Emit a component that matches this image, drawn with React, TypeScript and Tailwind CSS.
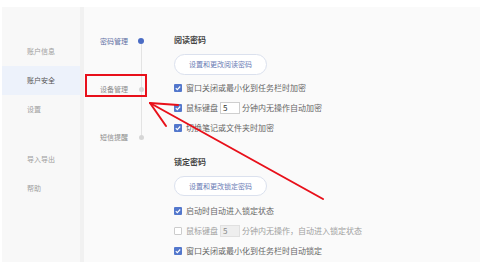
import React from "react";

const FONT = "font-['Noto_Sans_CJK_SC','Noto_Sans',sans-serif]";

function Check({ on }: { on: boolean }) {
  return on ? (
    <span className="flex h-[8px] w-[8px] items-center justify-center rounded-[1px] bg-[#5377cc]">
      <svg viewBox="0 0 8 8" className="h-[8px] w-[8px]">
        <path d="M1.8 4.1 L3.3 5.6 L6.2 2.5" fill="none" stroke="#fff" strokeWidth="1.1" />
      </svg>
    </span>
  ) : (
    <span className="h-[8px] w-[8px] rounded-[1px] border border-[#cccccc] bg-white" />
  );
}

function Row({ on = true, children }: { on?: boolean; children: React.ReactNode }) {
  return (
    <div className="flex h-[20px] items-center">
      <Check on={on} />
      <div className={`ml-[4px] flex items-center text-[8px] ${on ? "text-[#666]" : "text-[#a0a0a0]"}`}>{children}</div>
    </div>
  );
}

function MinuteBox({ disabled }: { disabled?: boolean }) {
  return (
    <span
      className={`mx-[2px] flex h-[12px] w-[20px] items-center border px-[2px] text-[8px] ${
        disabled ? "border-[#e0e0e0] bg-[#eeeeee] text-[#888]" : "border-[#cfcfcf] bg-white text-[#333]"
      }`}
    >
      5
    </span>
  );
}

const sideItems = ["账户信息", "账户安全", "设置"];
const subItems = ["密码管理", "设备管理", "短信提醒"];

export default function App() {
  return (
    <div className={`relative flex h-[262px] w-[480px] overflow-hidden bg-white pl-[2px] pt-[7px] ${FONT}`}>
      {/* left menu */}
      <div className="h-full w-[78px] bg-[#f8f8f8] pt-[30px]">
        {sideItems.map((s, i) => (
          <div
            key={s}
            className={`flex h-[29px] items-center pl-[25px] text-[7px] ${
              i === 1 ? "bg-[#edf2fb] text-[#555]" : "text-[#a0a0a0]"
            }`}
          >
            {s}
          </div>
        ))}
        <div className="mt-[21px] flex h-[29px] items-center pl-[25px] text-[7px] text-[#a0a0a0]">导入导出</div>
        <div className="flex h-[29px] items-center pl-[25px] text-[7px] text-[#a0a0a0]">帮助</div>
      </div>
      <div className="h-full w-[4px] bg-[#f1f1f1]" />

      <div className="flex h-full flex-1 bg-[#fafafa]">
        {/* sub menu */}
        <div className="relative w-[80px] pt-[10px]">
          <div className="absolute left-[57px] top-[34px] h-[96px] w-px bg-[#e3e3e3]" />
          {subItems.map((s, i) => (
            <div key={s} className="relative flex h-[48px] items-center pl-[16px]">
              <span className={`w-[38px] text-[7px] ${i === 0 ? "text-[#5f6fa3]" : "text-[#8c8c8c]"}`}>{s}</span>
              <span className="flex w-[6px] justify-center">
                {i === 0 ? (
                  <span className="h-[6px] w-[6px] rounded-full bg-[#4a6cc4]" />
                ) : (
                  <span className="h-[5px] w-[5px] rounded-full bg-[#d6d6d6]" />
                )}
              </span>
            </div>
          ))}
        </div>

        {/* settings */}
        <div className="flex flex-1 flex-col pl-[10px] pt-[26px]">
          <div className="h-[14px] text-[8px] font-bold leading-[14px] text-[#444]">阅读密码</div>
          <div className="mt-[7px] flex h-[21px] w-[93px] items-center justify-center rounded-full border border-[#dbe1ee] bg-white text-[7px] text-[#6a7cb5]">
            设置和更改阅读密码
          </div>
          <div className="mt-[3px]">
            <Row>窗口关闭或最小化到任务栏时加密</Row>
            <Row>
              鼠标键盘
              <MinuteBox />
              分钟内无操作自动加密
            </Row>
            <Row>切换笔记或文件夹时加密</Row>
          </div>

          <div className="mt-[17px] h-[14px] text-[8px] font-bold leading-[14px] text-[#444]">锁定密码</div>
          <div className="mt-[7px] flex h-[20px] w-[93px] items-center justify-center rounded-full border border-[#dbe1ee] bg-white text-[7px] text-[#6a7cb5]">
            设置和更改锁定密码
          </div>
          <div className="mt-[5px]">
            <Row>启动时自动进入锁定状态</Row>
            <Row on={false}>
              鼠标键盘
              <MinuteBox disabled />
              分钟内无操作，自动进入锁定状态
            </Row>
            <Row>窗口关闭或最小化到任务栏时自动锁定</Row>
          </div>
        </div>
      </div>

      {/* annotation */}
      <div className="absolute left-[85px] top-[74px] h-[23px] w-[62px] border-2 border-[#e8101a]" />
      <svg className="pointer-events-none absolute left-0 top-0" width="480" height="262" viewBox="0 0 480 262">
        <g stroke="#e8101a" strokeWidth="2" strokeLinecap="round" fill="none">
          <line x1="323" y1="199" x2="150" y2="103" />
          <line x1="150" y1="103" x2="178" y2="105" />
          <line x1="150" y1="103" x2="166" y2="126" />
        </g>
      </svg>
    </div>
  );
}
